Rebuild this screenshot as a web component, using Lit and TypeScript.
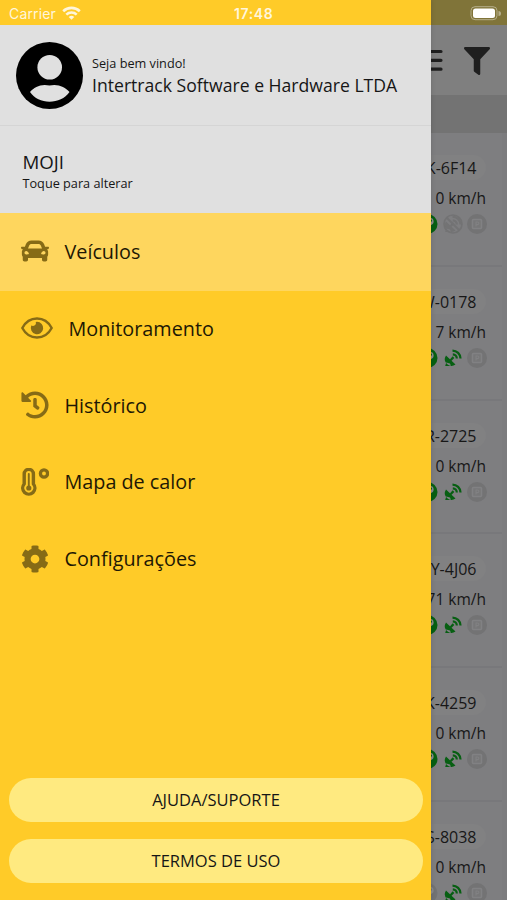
import { LitElement, html, css, svg } from "lit";
import { customElement } from "lit/decorators.js";
import { classMap } from "lit/directives/class-map.js";

interface Vehicle {
  plate: string;
  speed: string;
  key: boolean;
  signal: boolean;
}

const vehicles: Vehicle[] = [
  { plate: "K-6F14", speed: "0 km/h", key: true, signal: false },
  { plate: "W-0178", speed: "7 km/h", key: true, signal: true },
  { plate: "R-2725", speed: "0 km/h", key: true, signal: true },
  { plate: "Y-4J06", speed: "71 km/h", key: true, signal: true },
  { plate: "K-4259", speed: "0 km/h", key: true, signal: true },
  { plate: "S-8038", speed: "0 km/h", key: false, signal: true },
];

const carIcon = html`<svg width="28" height="28" viewBox="0 0 512 512" fill="currentColor"><path d="M499.99 176h-59.87l-16.64-41.6C406.38 91.63 365.57 64 319.5 64h-127c-46.06 0-86.88 27.63-103.99 70.4L71.87 176H12.01C4.2 176-1.53 183.34.37 190.91l6 24C7.7 220.25 12.5 224 18.01 224h20.07C24.65 235.73 16 252.78 16 272v48c0 16.12 6.16 30.67 16 41.93V416c0 17.67 14.33 32 32 32h32c17.67 0 32-14.33 32-32v-32h256v32c0 17.67 14.33 32 32 32h32c17.67 0 32-14.33 32-32v-54.07c9.84-11.25 16-25.8 16-41.93v-48c0-19.22-8.65-36.27-22.07-48H494c5.51 0 10.31-3.75 11.64-9.09l6-24c1.89-7.57-3.84-14.91-11.65-14.91zm-352.06-17.83c7.29-18.22 24.94-30.17 44.57-30.17h127c19.63 0 37.28 11.95 44.57 30.17L384 208H128l19.93-49.83zM96 319.8c-19.2 0-32-12.76-32-31.9S76.8 256 96 256s48 28.71 48 47.85-28.8 15.95-48 15.95zm320 0c-19.2 0-48 3.19-48-15.95S396.8 256 416 256s32 12.76 32 31.9-12.8 31.9-32 31.9z"/></svg>`;

const eyeIcon = html`<svg width="32" height="28" viewBox="0 0 32 28" fill="none"><path d="M1.300 14C4.400 8.200 9.800 4.500 16 4.500S27.600 8.200 30.700 14C27.600 19.800 22.200 23.500 16 23.500S4.400 19.800 1.300 14Z" stroke="currentColor" stroke-width="2.400" stroke-linejoin="round"/><path d="M16 7.800a6.200 6.200 0 1 1-5.700 3.800a3.100 3.100 0 0 0 4.500-3.700a6.200 6.200 0 0 1 1.200-.1Z" fill="currentColor"/></svg>`;

const historyIcon = html`<svg width="28" height="28" viewBox="0 0 512 512" fill="currentColor"><path d="M504 255.531c.253 136.64-111.18 248.372-247.82 248.468-59.015.042-113.223-20.53-155.822-54.911-11.077-8.94-11.905-25.541-1.839-35.607l11.267-11.267c8.609-8.609 22.353-9.551 31.891-1.984C173.062 425.135 212.781 440 256 440c101.705 0 184-82.311 184-184 0-101.705-82.311-184-184-184-48.814 0-93.149 18.969-126.068 49.932l50.754 50.754c10.08 10.08 2.941 27.314-11.313 27.314H24c-8.837 0-16-7.163-16-16V38.627c0-14.254 17.234-21.393 27.314-11.314l49.372 49.372C129.209 34.136 189.552 8 256 8c136.81 0 247.747 110.78 248 247.531zm-180.912 78.784l9.823-12.63c8.138-10.463 6.253-25.542-4.21-33.679L288 256.349V152c0-13.255-10.745-24-24-24h-16c-13.255 0-24 10.745-24 24v135.651l65.409 50.874c10.463 8.137 25.541 6.253 33.679-4.21z"/></svg>`;

const heatIcon = html`<svg width="28" height="28" viewBox="0 0 28 28" fill="none" stroke="currentColor"><path d="M3.200 6a4.600 4.600 0 0 1 9.200 0V16a6.100 6.100 0 1 1-9.200 0Z" stroke-width="3.400" stroke-linejoin="round"/><path d="M7.800 6V19.500" stroke-width="1.900" stroke-linecap="round"/><circle cx="7.800" cy="20" r="2.600" fill="currentColor" stroke="none"/><circle cx="23" cy="5.500" r="3.600" stroke-width="3.300"/></svg>`;

const cogIcon = html`<svg width="28" height="28" viewBox="0 0 512 512" fill="currentColor"><path d="M487.4 315.7l-42.6-24.6c4.3-23.2 4.3-47 0-70.2l42.6-24.6c4.9-2.8 7.1-8.6 5.5-14-11.1-35.6-30-67.8-54.7-94.6-3.8-4.1-10-5.1-14.8-2.3L380.8 110c-17.9-15.4-38.5-27.3-60.8-35.1V25.8c0-5.6-3.9-10.5-9.4-11.7-36.7-8.2-74.3-7.8-109.2 0-5.5 1.2-9.400 6.100-9.400 11.700V75c-22.200 7.900-42.800 19.800-60.800 35.100L88.700 85.500c-4.900-2.800-11-1.900-14.800 2.300-24.700 26.700-43.600 58.900-54.700 94.600-1.700 5.400.6 11.200 5.500 14L67.300 221c-4.300 23.200-4.300 47 0 70.200l-42.600 24.600c-4.900 2.800-7.100 8.600-5.500 14 11.100 35.600 30 67.800 54.700 94.600 3.800 4.100 10 5.100 14.800 2.300l42.600-24.600c17.900 15.400 38.500 27.300 60.800 35.100v49.200c0 5.600 3.900 10.500 9.400 11.700 36.700 8.200 74.300 7.800 109.200 0 5.500-1.200 9.400-6.100 9.400-11.700v-49.200c22.200-7.900 42.800-19.800 60.800-35.100l42.600 24.600c4.900 2.800 11 1.900 14.800-2.300 24.700-26.700 43.600-58.900 54.700-94.600 1.500-5.500-.7-11.300-5.600-14.100zM256 336c-44.100 0-80-35.900-80-80s35.900-80 80-80 80 35.900 80 80-35.900 80-80 80z"/></svg>`;

const menu = [
  { label: "Veículos", icon: carIcon, active: true },
  { label: "Monitoramento", icon: eyeIcon, active: false },
  { label: "Histórico", icon: historyIcon, active: false },
  { label: "Mapa de calor", icon: heatIcon, active: false },
  { label: "Configurações", icon: cogIcon, active: false },
];

const dish = svg`<path d="M3 7.500 12.500 16.600A6.700 6.700 0 0 1 3 7.500Z M7 11.200l2.700-2.900 1.600 1.600-2.700 2.900Z M3.200 14.500l-1 3.500h5.800l-1-2.500Z" fill="currentColor"/><path d="M9.800 6.300a4.200 4.200 0 0 1 4 4.200M9.500 2.600a8 8 0 0 1 8 7.900" fill="none" stroke="currentColor" stroke-width="2.200"/>`;

@customElement("vehicle-list")
export class VehicleList extends LitElement {
  static styles = css`
    :host { display: block; background: #7c7c7e; }
    .card {
      box-sizing: border-box;
      height: 133.8px;
      margin-right: 5px;
      padding: 22px 16px 0 0;
      display: flex;
      flex-direction: column;
      align-items: flex-end;
      background: #7e7e80;
      border-bottom: 2px solid #78787b;
      color: #171717;
      font-size: 16px;
    }
    .plate {
      height: 25px;
      line-height: 26px;
      padding: 0 9px;
      margin-right: 0.500px;
      border-radius: 13px;
      background: #818182;
    }
    .speed { height: 22px; line-height: 22px; margin-top: 7px; font-size: 15.500px; }
    .states { display: flex; gap: 4.500px; height: 20px; margin-top: 5px; margin-right: -1px; }
    .state { display: block; width: 20px; height: 20px; color: #737374; }
    .on { color: #075f12; }
  `;

  render() {
    return vehicles.map(
      (v) => html`<div class="card">
        <div class="plate">${v.plate}</div>
        <div class="speed">${v.speed}</div>
        <div class="states">
          <svg class=${classMap({ state: true, on: v.key })} viewBox="0 0 20 20">
            <circle cx="9.500" cy="10" r="10" fill="currentColor" />
            <circle cx="12.200" cy="7.500" r="3.400" fill="#8c8c8c" />
            <path d="m11 9-6 6" stroke="#8c8c8c" stroke-width="2.200" />
            <circle cx="13" cy="6.700" r="1.100" fill="currentColor" />
          </svg>
          ${v.signal
            ? html`<svg class="state on" viewBox="0 0 20 20">${dish}</svg>`
            : html`<svg class="state" viewBox="0 0 20 20">
                <circle cx="10" cy="10" r="9" fill="none" stroke="currentColor" stroke-width="1.700" />
                ${dish}
                <path d="m4 4 12 12" stroke="currentColor" stroke-width="2" />
              </svg>`}
          <svg class="state" viewBox="0 0 20 20">
            <circle cx="10" cy="10" r="10" fill="currentColor" />
            <rect x="5.500" y="5.500" width="9" height="9" rx="1" fill="#777778" stroke="#818183" stroke-width="1.600" />
            <path d="M9 12.500V8h1.500a1.300 1.300 0 0 1 0 2.700H9" fill="none" stroke="#818183" stroke-width="1.200" />
          </svg>
        </div>
      </div>`
    );
  }
}

@customElement("side-drawer")
export class SideDrawer extends LitElement {
  static styles = css`
    :host {
      display: flex;
      flex-direction: column;
      background: #ffcb28;
      color: #161616;
    }
    .status {
      flex: none;
      display: flex;
      align-items: center;
      height: 25px;
      box-sizing: border-box;
      padding: 2px 0 0 9px;
      color: #fff6dc;
      font-family: Inter, "Liberation Sans", sans-serif;
      font-size: 14px;
    }
    .carrier { width: 47px; white-space: nowrap; letter-spacing: 0.150px; }
    .wifi { margin-left: 6px; margin-top: -2px; display: block; }
    .clock { margin-left: 153px; font-weight: 600; letter-spacing: 0.600px; }
    .profile {
      flex: none;
      box-sizing: border-box;
      height: 101px;
      display: flex;
      padding: 17px 0 0 16px;
      background: #e0e0e0;
      border-bottom: 1px solid #d5d5d5;
    }
    .avatar { display: block; flex: none; }
    .welcome { margin-left: 9px; padding-top: 12px; white-space: nowrap; }
    .small { font-size: 12.700px; line-height: 19px; }
    .name { font-size: 17.620px; line-height: 24px; }
    .client {
      flex: none;
      box-sizing: border-box;
      height: 87px;
      padding: 23px 0 0 22.500px;
      background: #e0e0e0;
    }
    .client-name { font-size: 18.700px; line-height: 25px; }
    .item {
      flex: none;
      box-sizing: border-box;
      height: 76.900px;
      display: flex;
      align-items: center;
      gap: 15.500px;
      padding: 0 0 1.500px 21px;
      font-size: 19.800px;
      color: #1e1804;
    }
    .active { background: #fed65e; height: 77.500px; }
    .icon { display: flex; color: #866b16; }
    .actions {
      margin-top: auto;
      padding: 0 8px 17px 9px;
      display: flex;
      flex-direction: column;
      gap: 17px;
    }
    .button {
      height: 44px;
      border-radius: 22px;
      background: #ffea80;
      text-align: center;
      line-height: 44px;
      font-size: 16.500px;
    }
  `;

  render() {
    return html`
      <div class="status">
        <span class="carrier">Carrier</span>
        <svg class="wifi" width="19" height="14" viewBox="0 0 19 14" fill="none" stroke="currentColor" stroke-width="2.600">
          <path d="M1.200 5.200a12 12 0 0 1 16.600 0" />
          <path d="M4.300 8.600a7.500 7.500 0 0 1 10.400 0" />
          <path d="M6.700 11.100a4 4 0 0 1 5.600 0L9.500 13.800Z" fill="currentColor" stroke="none" />
        </svg>
        <span class="clock">17:48</span>
      </div>
      <div class="profile">
        <svg class="avatar" width="67" height="67" viewBox="0 0 67 67">
          <circle cx="33.500" cy="33.500" r="33.500" fill="#000" />
          <circle cx="33.700" cy="25.300" r="12.300" fill="#e0e0e0" />
          <path d="M14 50C18.500 45 25 41.500 33.500 43.500C42 41.500 49 45 53.500 50C49 56.500 41.500 59.700 33.500 59.700S18.500 56.500 14 50Z" fill="#e0e0e0" />
        </svg>
        <div class="welcome">
          <div class="small">Seja bem vindo!</div>
          <div class="name">Intertrack Software e Hardware LTDA</div>
        </div>
      </div>
      <div class="client">
        <div class="client-name">MOJI</div>
        <div class="small">Toque para alterar</div>
      </div>
      ${menu.map(
        (m) => html`<div class=${classMap({ item: true, active: m.active })}>
          <span class="icon">${m.icon}</span><span>${m.label}</span>
        </div>`
      )}
      <div class="actions">
        <div class="button">AJUDA/SUPORTE</div>
        <div class="button">TERMOS DE USO</div>
      </div>
    `;
  }
}

@customElement("app-root")
export class AppRoot extends LitElement {
  static styles = css`
    :host {
      display: block;
      position: relative;
      height: 900px;
      overflow: hidden;
      font-family: "Open Sans", "Noto Sans", sans-serif;
    }
    .status {
      height: 25px;
      box-sizing: border-box;
      display: flex;
      justify-content: flex-end;
      padding: 6px 6px 0 0;
      background: #807439;
    }
    .toolbar {
      height: 70px;
      box-sizing: border-box;
      display: flex;
      justify-content: flex-end;
      gap: 21px;
      padding: 22px 17px 0 0;
      background: #7f7f7f;
      color: #1f1f1f;
    }
    .search { height: 38px; background: #737373; }
    .drawer {
      position: absolute;
      top: 0;
      left: 0;
      width: 431px;
      height: 900px;
      box-shadow: 0 0 5px rgba(0, 0, 0, 0.150);
    }
  `;

  render() {
    return html`
      <div class="status">
        <svg width="31" height="15" viewBox="0 0 31 15">
          <rect x="1" y="0.700" width="26" height="13" rx="4" fill="none" stroke="#b5ae8b" />
          <rect x="3" y="2.500" width="22" height="9.500" rx="2.500" fill="#fff" />
          <path d="M28.500 5a2.500 2.500 0 0 1 0 5Z" fill="#b5ae8b" />
        </svg>
      </div>
      <div class="toolbar">
        <svg width="26" height="26" viewBox="0 0 26 26" stroke="currentColor" stroke-width="3.200" stroke-linecap="round">
          <path d="M2 4.500h22M2 13.300h22M2 22.200h22" />
        </svg>
        <svg width="26" height="28" viewBox="0 0 512 512" preserveAspectRatio="none" fill="currentColor"><path d="M487.976 0H24.028C2.710 0-8.047 25.866 7.058 40.971L192 225.941V432c0 7.831 3.821 15.170 10.237 19.662l80 55.980C298.020 518.690 320 507.493 320 487.980V225.941l184.947-184.970C520.021 25.896 509.338 0 487.976 0z"/></svg>
      </div>
      <div class="search"></div>
      <vehicle-list></vehicle-list>
      <side-drawer class="drawer"></side-drawer>
    `;
  }
}
